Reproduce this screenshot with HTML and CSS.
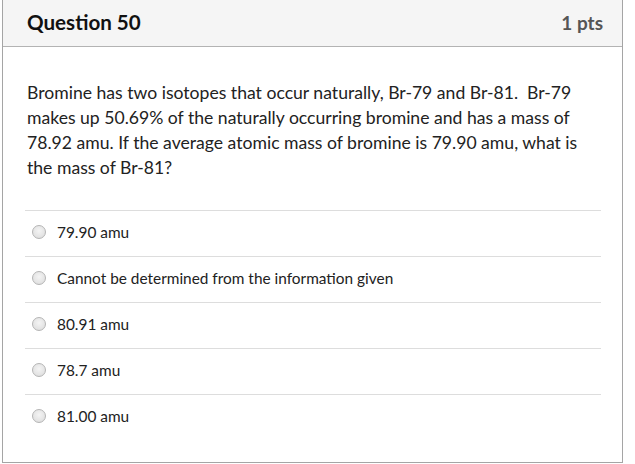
FILE: index.html
```html
<!DOCTYPE html>
<html>
<head>
<meta charset="utf-8">
<link rel="stylesheet" href="styles.css">
</head>
<body>
<div class="question">
  <div class="header">
    <span class="title">Question 50</span>
    <span class="pts">1 pts</span>
  </div>
  <div class="content">
    <p class="text">Bromine has two isotopes that occur naturally, Br-79 and Br-81.&nbsp; Br-79 makes up 50.69% of the naturally occurring bromine and has a mass of 78.92 amu. If the average atomic mass of bromine is 79.90 amu, what is the mass of Br-81?</p>
    <div class="answers">
      <div class="answer"><span class="radio"></span><span class="label">79.90 amu</span></div>
      <div class="answer"><span class="radio"></span><span class="label">Cannot be determined from the information given</span></div>
      <div class="answer"><span class="radio"></span><span class="label">80.91 amu</span></div>
      <div class="answer"><span class="radio"></span><span class="label">78.7 amu</span></div>
      <div class="answer"><span class="radio"></span><span class="label">81.00 amu</span></div>
    </div>
  </div>
</div>
</body>
</html>
```
FILE: styles.css
```css
html, body {
  margin: 0;
  padding: 0;
  background: #fff;
}
body {
  padding-left: 2px;
  font-family: Lato, "Open Sans", sans-serif;
  color: #222;
}
.question {
  width: 621px;
  height: 463px;
  border: 1px solid #a5a5a5;
  border-top: none;
  box-sizing: border-box;
  display: flex;
  flex-direction: column;
}
.header {
  height: 47px;
  box-sizing: border-box;
  background: #f5f5f5;
  border-bottom: 1px solid #b3b3b3;
  display: flex;
  align-items: center;
  justify-content: space-between;
  padding: 0 19px 2px 24px;
}
.title {
  font-size: 20.6px;
  font-weight: 700;
  color: #111;
}
.pts {
  font-size: 19px;
  font-weight: 700;
  color: #555;
}
.content {
  padding: 33px 21px 0 22px;
}
.text {
  margin: 0 0 30px 2px;
  font-size: 17.6px;
  line-height: 25px;
  color: #222;
}
.answers {
  display: flex;
  flex-direction: column;
}
.answer {
  height: 46px;
  box-sizing: border-box;
  border-top: 1px solid #ddd;
  display: flex;
  align-items: center;
  padding-left: 7px;
  padding-bottom: 4px;
}
.radio {
  width: 14px;
  height: 14px;
  box-sizing: border-box;
  border-radius: 50%;
  border: 1px solid #b5b5b5;
  background: radial-gradient(circle at 50% 40%, #f4f4f4 0%, #e2e2e2 70%, #d5d5d5 100%);
  margin-right: 11px;
  flex: none;
}
.label {
  font-size: 15.4px;
  color: #222;
}
```
